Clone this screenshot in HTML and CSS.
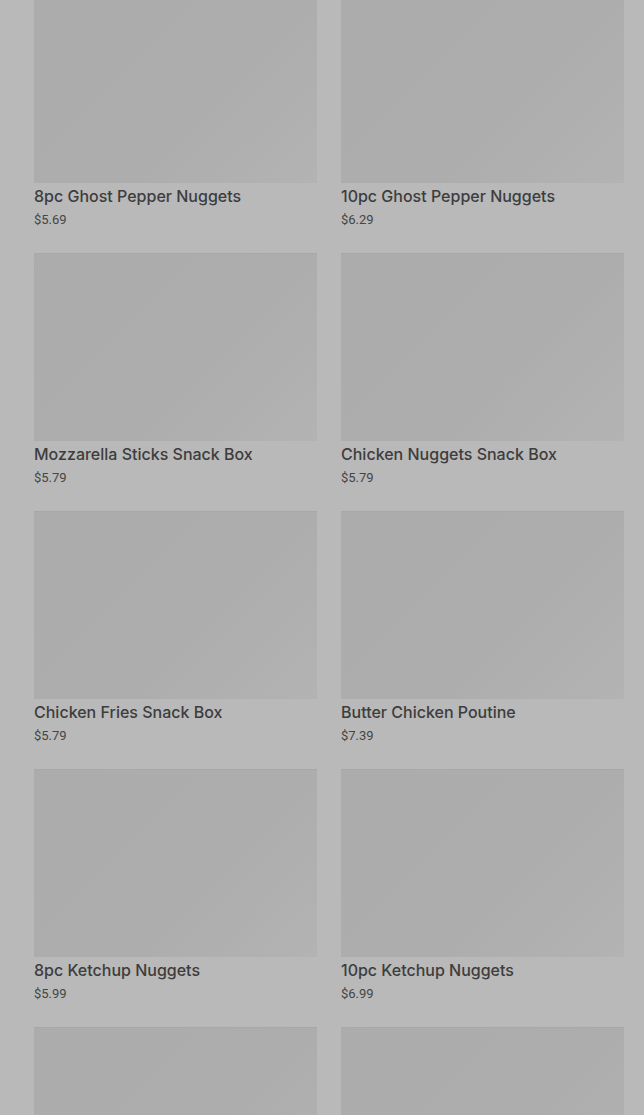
FILE: index.html
```html
<!DOCTYPE html>
<html lang="en">
<head>
  <meta charset="UTF-8" />
  <meta name="viewport" content="width=device-width, initial-scale=1.0" />
  <title>Menu</title>
  <link rel="stylesheet" href="styles.css">
</head>
<body>
  <div class="menu-grid">
    <div class="item">
      <div class="item-img"></div>
      <div class="item-name">8pc Ghost Pepper Nuggets</div>
      <div class="item-price">$5.69</div>
    </div>
    <div class="item">
      <div class="item-img"></div>
      <div class="item-name">10pc Ghost Pepper Nuggets</div>
      <div class="item-price">$6.29</div>
    </div>
    <div class="item">
      <div class="item-img"></div>
      <div class="item-name">Mozzarella Sticks Snack Box</div>
      <div class="item-price">$5.79</div>
    </div>
    <div class="item">
      <div class="item-img"></div>
      <div class="item-name">Chicken Nuggets Snack Box</div>
      <div class="item-price">$5.79</div>
    </div>
    <div class="item">
      <div class="item-img"></div>
      <div class="item-name">Chicken Fries Snack Box</div>
      <div class="item-price">$5.79</div>
    </div>
    <div class="item">
      <div class="item-img"></div>
      <div class="item-name">Butter Chicken Poutine</div>
      <div class="item-price">$7.39</div>
    </div>
    <div class="item">
      <div class="item-img"></div>
      <div class="item-name">8pc Ketchup Nuggets</div>
      <div class="item-price">$5.99</div>
    </div>
    <div class="item">
      <div class="item-img"></div>
      <div class="item-name">10pc Ketchup Nuggets</div>
      <div class="item-price">$6.99</div>
    </div>
    <div class="item">
      <div class="item-img"></div>
    </div>
    <div class="item">
      <div class="item-img"></div>
    </div>
  </div>
</body>
</html>
```
FILE: styles.css
```css
html, body {
  margin: 0;
  background-color: #b9b9b9;
  overflow: hidden;
}
body {
  font-family: Inter, Roboto, "Liberation Sans", sans-serif;
  height: 1115px;
}
.menu-grid {
  display: grid;
  grid-template-columns: 283px 283px;
  column-gap: 24px;
  row-gap: 22px;
  padding-left: 34px;
  margin-top: -5px;
}
.item-img {
  height: 188px;
  background: linear-gradient(135deg, #acacac 0%, #adadad 60%, #b3b3b3 100%);
  border-top: 1px solid #a8a8a8;
  box-sizing: border-box;
}
.item-name {
  margin-top: 1px;
  font-size: 16px;
  line-height: 24px;
  font-weight: 500;
  color: #3d3d3d;
}
.item-price {
  margin-top: 1px;
  font-family: Roboto, "Liberation Sans", sans-serif;
  font-size: 13px;
  line-height: 22px;
  color: #454545;
}
```
